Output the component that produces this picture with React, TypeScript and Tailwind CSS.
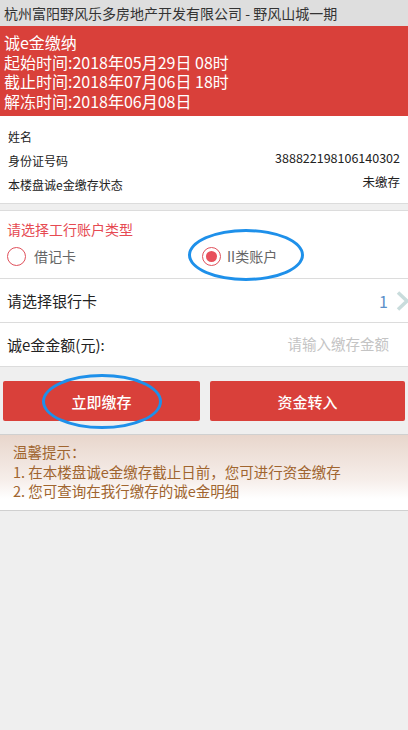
import React from 'react';

const font = { fontFamily: '"Noto Sans CJK SC", "Noto Sans", sans-serif' };

const InfoRow: React.FC<{ label: string; value?: string }> = ({ label, value }) => (
  <div className="flex h-[24px] items-center justify-between">
    <span className="text-[12px] text-[#222]">{label}</span>
    {value && <span className="pb-[6px] text-[12.5px] text-[#222]">{value}</span>}
  </div>
);

const Radio: React.FC<{ checked?: boolean }> = ({ checked }) => (
  <span className="flex h-[19px] w-[19px] items-center justify-center rounded-full border-[1.5px] border-[#e0505b]">
    {checked && <span className="h-[11px] w-[11px] rounded-full bg-[#e8505c]" />}
  </span>
);

const App: React.FC = () => {
  return (
    <div className="min-h-screen w-full bg-[#efefef] leading-none" style={font}>
      <div className="h-[26px] bg-[#dedede] px-[4px] text-[14px] leading-[26px] text-[#333]">
        杭州富阳野风乐多房地产开发有限公司 - 野风山城一期
      </div>

      <div className="h-[90px] bg-[#d9403a] px-[4px] pt-[7px] text-[16px] leading-[19.5px] text-white">
        <div>诚e金缴纳</div>
        <div>起始时间:2018年05月29日 08时</div>
        <div>截止时间:2018年07月06日 18时</div>
        <div>解冻时间:2018年06月08日</div>
      </div>

      <div className="border-b border-[#dcdcdc] bg-white px-[8px] pb-[6px] pt-[9px]">
        <InfoRow label="姓名" />
        <InfoRow label="身份证号码" value="388822198106140302" />
        <InfoRow label="本楼盘诚e金缴存状态" value="未缴存" />
      </div>

      <div className="mt-[6px] border-t border-[#dcdcdc] bg-white">
        <div className="px-[7px] pt-[9px]">
          <div className="text-[14px] leading-[18px] text-[#e64a52]">请选择工行账户类型</div>
          <div className="relative flex h-[40px] items-center pb-[4px]">
            <div className="flex w-[195px] items-center gap-[8px]">
              <Radio />
              <span className="text-[14px] text-[#666]">借记卡</span>
            </div>
            <div className="flex items-center gap-[6px]">
              <Radio checked />
              <span className="text-[14px] text-[#666]">II类账户</span>
            </div>
            <span className="absolute left-[181px] top-[-9px] h-[52px] w-[116px] rounded-[50%] border-[3px] border-[#1e90ea]" />
          </div>
        </div>

        <div className="flex h-[44px] items-center justify-between overflow-hidden border-t border-[#dcdcdc] pl-[7px]">
          <span className="text-[15px] text-[#222]">请选择银行卡</span>
          <div className="flex items-center gap-[8px]">
            <span className="text-[16px] text-[#5b8fc9]">1</span>
            <svg width="13" height="20" viewBox="0 0 13 20" className="mr-[-1px]">
              <polyline points="2,1.5 11,10 2,18.5" fill="none" stroke="#c9dcdc" strokeWidth="3.5" />
            </svg>
          </div>
        </div>

        <div className="flex h-[44px] items-center justify-between border-t border-[#dcdcdc] pl-[7px] pr-[19px]">
          <span className="text-[15px] text-[#222]">诚e金金额(元):</span>
          <span className="text-[14.5px] text-[#c4c4c4]">请输入缴存金额</span>
        </div>
      </div>

      <div className="border-t border-[#dcdcdc] px-[3px] pb-[13px] pt-[14px]">
        <div className="flex gap-[10px]">
          <button className="relative flex h-[40px] w-[197px] items-center justify-center rounded-[2px] bg-[#d9403a] text-[15px] font-medium text-white">
            立即缴存
            <span className="absolute left-[39px] top-[-7px] h-[55px] w-[120px] rounded-[50%] border-[3px] border-[#1e90ea]" />
          </button>
          <button className="flex h-[40px] flex-1 items-center justify-center rounded-[2px] bg-[#d9403a] text-[15px] font-medium text-white">
            资金转入
          </button>
        </div>
      </div>

      <div className="border-y border-[#d0d0d0] bg-[linear-gradient(to_bottom,#e8d6cc_0%,#f6eeea_60%,#ffffff_85%,#ffffff_100%)] px-[13px] pb-[9px] pt-[7px] text-[14.5px] leading-[19.5px] text-[#a0652f]">
        <div>温馨提示：</div>
        <div>1. 在本楼盘诚e金缴存截止日前，您可进行资金缴存</div>
        <div>2. 您可查询在我行缴存的诚e金明细</div>
      </div>
    </div>
  );
};

export default App;
